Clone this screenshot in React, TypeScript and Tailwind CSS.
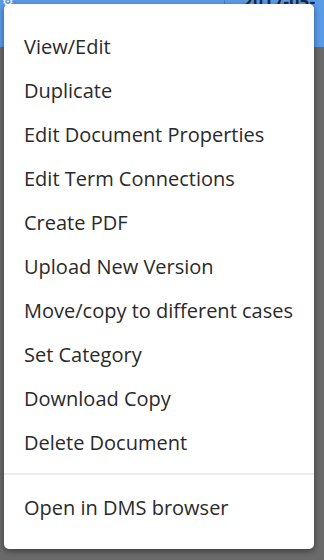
import React from "react";

const items = [
  "View/Edit",
  "Duplicate",
  "Edit Document Properties",
  "Edit Term Connections",
  "Create PDF",
  "Upload New Version",
  "Move/copy to different cases",
  "Set Category",
  "Download Copy",
  "Delete Document",
];

export default function App() {
  return (
    <div
      className="relative w-[324px] h-[560px] overflow-hidden bg-[#6a6a6a]"
      style={{ fontFamily: '"Open Sans", "Liberation Sans", sans-serif' }}
    >
      {/* background page */}
      <div className="flex flex-col h-full">
        <div className="relative h-[47px] bg-[#5b9ce8] flex">
          <div className="w-[225px] border-r border-[#3f7fcc] flex items-start">
            <span className="mt-[-8px] ml-[2px] text-[13px] text-white">⚙</span>
          </div>
          <div className="flex-1 flex items-start">
            <span className="mt-[-11px] ml-[18px] text-[17px] font-bold text-[#1d2b3a] tracking-wide">
              2017-05-
            </span>
          </div>
        </div>
        <div className="flex-1 bg-[#6a6a6a]" />
      </div>

      {/* popover menu */}
      <div className="absolute left-[4px] top-[4px] w-[310px] h-[545px] bg-white rounded-[5px] shadow-[0_2px_6px_rgba(0,0,0,0.45)] flex flex-col pt-[21px] pb-[19px]">
        {items.map((t) => (
          <div
            key={t}
            className="h-[44px] px-[20px] py-[10px] text-[20px] leading-[24px] text-[#2a2a2a] whitespace-nowrap"
          >
            {t}
          </div>
        ))}
        <div className="mt-[8px] h-[2px] bg-[#ececec]" />
        <div className="mt-[11px] h-[44px] px-[20px] py-[10px] text-[20px] leading-[24px] text-[#2a2a2a] whitespace-nowrap">
          Open in DMS browser
        </div>
      </div>
    </div>
  );
}
